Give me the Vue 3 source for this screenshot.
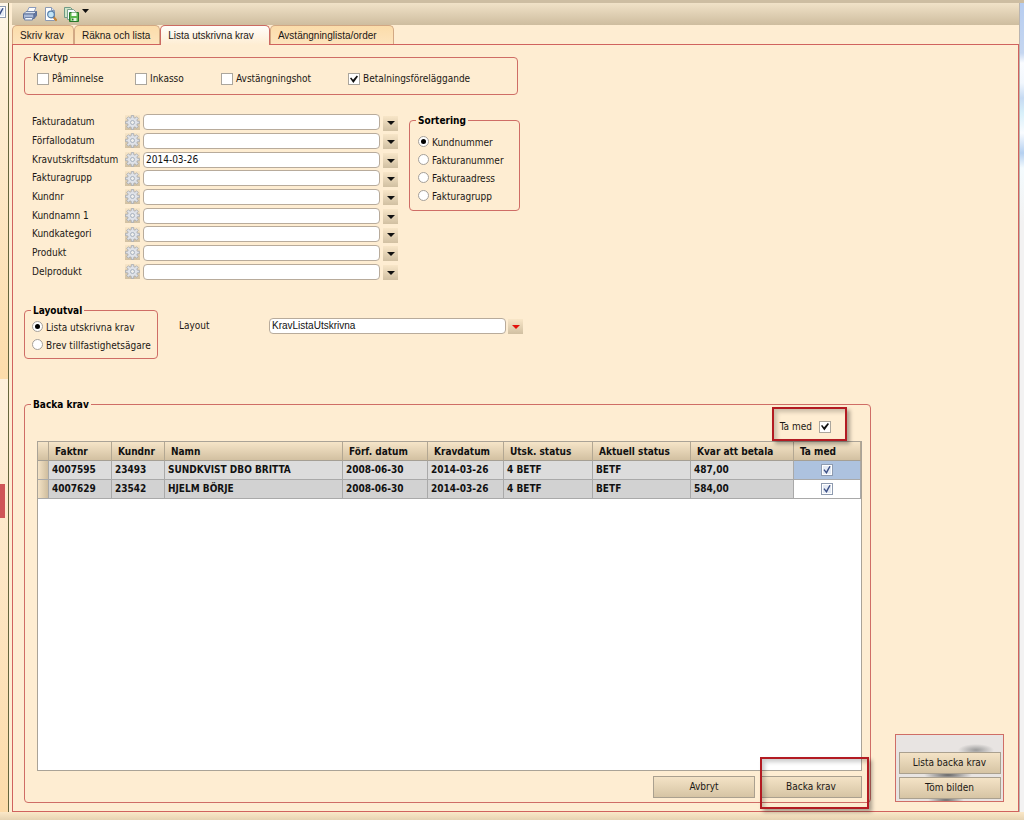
<script setup>
import { ref } from 'vue'

const tabs = ['Skriv krav', 'Räkna och lista', 'Lista utskrivna krav', 'Avstängninglista/order']
const activeTab = ref(2)

const types = ref([
  { id: 'paminnelse', label: 'Påminnelse', on: false },
  { id: 'inkasso', label: 'Inkasso', on: false },
  { id: 'avstangning', label: 'Avstängningshot', on: false },
  { id: 'betalning', label: 'Betalningsföreläggande', on: true }
])

const filters = ref([
  { id: 'fakturadatum', label: 'Fakturadatum', value: '' },
  { id: 'forfallodatum', label: 'Förfallodatum', value: '' },
  { id: 'kravutskriftsdatum', label: 'Kravutskriftsdatum', value: '2014-03-26' },
  { id: 'fakturagrupp', label: 'Fakturagrupp', value: '' },
  { id: 'kundnr', label: 'Kundnr', value: '' },
  { id: 'kundnamn', label: 'Kundnamn 1', value: '' },
  { id: 'kundkategori', label: 'Kundkategori', value: '' },
  { id: 'produkt', label: 'Produkt', value: '' },
  { id: 'delprodukt', label: 'Delprodukt', value: '' }
])

const sortOptions = ['Kundnummer', 'Fakturanummer', 'Fakturaadress', 'Fakturagrupp']
const sort = ref('Kundnummer')
const layoutOptions = ['Lista utskrivna krav', 'Brev tillfastighetsägare']
const layoutKind = ref('Lista utskrivna krav')
const layout = ref('KravListaUtskrivna')

const allOn = ref(true)
const columns = ['Faktnr', 'Kundnr', 'Namn', 'Förf. datum', 'Kravdatum', 'Utsk. status', 'Aktuell status', 'Kvar att betala', 'Ta med']
const rows = ref([
  { cells: ['4007595', '23493', 'SUNDKVIST DBO BRITTA', '2008-06-30', '2014-03-26', '4 BETF', 'BETF', '487,00'], on: true },
  { cells: ['4007629', '23542', 'HJELM BÖRJE', '2008-06-30', '2014-03-26', '4 BETF', 'BETF', '584,00'], on: true }
])

// Outline of an eight-toothed wheel centred in a 15x15 box
const gear = Array.from({ length: 8 }, (_, k) =>
  [[-15, 5], [-10, 7], [10, 7], [15, 5]].map(([a, r]) => {
    const t = ((k * 45 + a) * Math.PI) / 180
    return `${(7.5 + r * Math.sin(t)).toFixed(2)},${(7.5 - r * Math.cos(t)).toFixed(2)}`
  }).join(' ')
).join(' ')
</script>

<template>
  <div class="page">
    <div class="topline"></div>
    <div class="body">
      <aside class="left">
        <input class="check dim cut" type="checkbox" checked aria-label="Visa">
        <div class="left-top"></div>
        <div class="left-bottom"><span class="mark"></span></div>
      </aside>

      <main class="main">
        <div class="toolbar">
          <button class="tool" aria-label="Skriv ut">
            <svg width="16" height="16" viewBox="0 0 16 16">
              <path d="M5 6 7 1.5h7L12 6z" fill="#fff" stroke="#8a9abb" />
              <path d="M1.5 8 4 5.500h10.500L13 8z" fill="#dbe4f1" stroke="#7486a9" />
              <path d="M1.500 8H12v4.500H1.500z" fill="#a9bad8" stroke="#5c6f97" />
              <path d="M12 8l2.500-2.500v4.200L12 12.500z" fill="#6479a3" stroke="#5c6f97" />
              <path d="M3 11.500h7.500V14H2.500z" fill="#f5f8fd" stroke="#7486a9" />
            </svg>
          </button>
          <button class="tool" aria-label="Förhandsgranska">
            <svg width="16" height="16" viewBox="0 0 16 16">
              <path d="M2.500 1.500h6l3 3v10h-9z" fill="#fff" stroke="#8a99b3" />
              <path d="M8.500 1.500v3h3" fill="#d9e4f4" stroke="#8a99b3" />
              <path d="M10.500 11l2.500 3" stroke="#c58438" stroke-width="2.200" stroke-linecap="round" />
              <circle cx="8" cy="8.500" r="3.300" fill="#c1e4f6" stroke="#547da8" stroke-width="1.200" />
            </svg>
          </button>
          <button class="tool wide" aria-label="Spara som">
            <svg width="16" height="16" viewBox="0 0 16 16">
              <path d="M.5 1.500h6l2 2v8h-8z" fill="#cfe6c8" stroke="#6f9a86" />
              <path d="M3.500 3.500h6l2 2v8h-8z" fill="#f5faff" stroke="#7fa08f" />
              <path d="M5.500 6.500h9v9h-9z" fill="#5cb850" stroke="#28762a" />
              <path d="M7.500 6.500h5v3.500h-5z" fill="#f7fff4" />
              <path d="M7.500 12h5v3h-5z" fill="#e6f5e2" />
              <path d="M8 12.500h1.500v2H8z" fill="#28762a" />
            </svg>
            <svg class="caret" width="7" height="4" viewBox="0 0 7 4"><path d="M0 0h7L3.500 4z" fill="#111" /></svg>
          </button>
        </div>

        <nav class="tabs" role="tablist">
          <button
            v-for="(t, i) in tabs" :key="t" class="tab" :class="{ active: i === activeTab }"
            role="tab" :aria-selected="i === activeTab" @click="activeTab = i"
          >{{ t }}</button>
        </nav>

        <section class="panel">
          <fieldset class="box kravtyp">
            <legend class="light">Kravtyp</legend>
            <div class="types">
              <label v-for="t in types" :key="t.id" class="opt" :for="t.id">
                <input :id="t.id" v-model="t.on" class="check" type="checkbox">{{ t.label }}
              </label>
            </div>
          </fieldset>

          <div class="search">
            <div class="filters">
              <div v-for="f in filters" :key="f.id" class="filter">
                <label :for="f.id">{{ f.label }}</label>
                <button class="mini" :aria-label="'Inställningar ' + f.label">
                  <svg width="15" height="15" viewBox="0 0 15 15">
                    <polygon :points="gear" fill="#dfe2e8" stroke="#a2a6ac" stroke-width=".8" stroke-linejoin="round" />
                    <circle cx="7.500" cy="7.500" r="2" fill="#f0efec" stroke="#a6b0be" />
                  </svg>
                </button>
                <input :id="f.id" v-model="f.value" class="text" type="text">
                <button class="mini drop" :aria-label="'Välj ' + f.label">
                  <svg width="8" height="4" viewBox="0 0 8 4"><path d="M0 0h8L4 4z" fill="#111" /></svg>
                </button>
              </div>
            </div>
            <fieldset class="box sorting">
              <legend>Sortering</legend>
              <label v-for="s in sortOptions" :key="s" class="opt">
                <input v-model="sort" class="radio" type="radio" name="sort" :value="s"><span>{{ s }}</span>
              </label>
            </fieldset>
          </div>

          <div class="layout">
            <fieldset class="box kinds">
              <legend>Layoutval</legend>
              <label v-for="s in layoutOptions" :key="s" class="opt">
                <input v-model="layoutKind" class="radio" type="radio" name="kind" :value="s"><span>{{ s }}</span>
              </label>
            </fieldset>
            <div class="layout-row">
              <label for="layout">Layout</label>
              <input id="layout" v-model="layout" class="text arial" type="text">
              <button class="mini drop" aria-label="Välj layout">
                <svg width="8" height="4" viewBox="0 0 8 4"><path d="M0 0h8L4 4z" fill="#e3120c" /></svg>
              </button>
            </div>
          </div>

          <div class="lower">
            <fieldset class="box backa">
              <legend>Backa krav</legend>
              <div class="backa-in">
                <div class="all">
                  <label class="all-label callout">Ta med<input v-model="allOn" class="check" type="checkbox"></label>
                </div>
                <div class="grid">
                  <table>
                    <colgroup>
                      <col class="c-mark"><col class="c-fakt"><col class="c-kund"><col><col class="c-forf">
                      <col class="c-krav"><col class="c-utsk"><col class="c-akt"><col class="c-kvar"><col class="c-ta">
                    </colgroup>
                    <thead>
                      <tr><th></th><th v-for="c in columns" :key="c">{{ c }}</th></tr>
                    </thead>
                    <tbody>
                      <tr v-for="r in rows" :key="r.cells[0]">
                        <td class="handle"></td>
                        <td v-for="(c, i) in r.cells" :key="i">{{ c }}</td>
                        <td class="pick"><input v-model="r.on" class="check dim" type="checkbox" :aria-label="'Ta med ' + r.cells[0]"></td>
                      </tr>
                    </tbody>
                  </table>
                </div>
                <div class="actions">
                  <button class="btn">Avbryt</button>
                  <div class="callout big"><button class="btn">Backa krav</button></div>
                </div>
              </div>
            </fieldset>
            <div class="side">
              <button class="btn">Lista backa krav</button>
              <button class="btn">Töm bilden</button>
            </div>
          </div>
        </section>
      </main>
      <div class="right"></div>
    </div>
    <div class="bottomline"></div>
  </div>
</template>

<style>
body { background: #feedd2; }
</style>

<style scoped>
* { box-sizing: border-box; }
.page {
  min-height: 100vh;
  display: flex;
  flex-direction: column;
  background: #feedd2;
  color: #1c1814;
  font: 10px/14px "DejaVu Sans Condensed", "DejaVu Sans", "Noto Sans", sans-serif;
}
button, input { font: inherit; color: inherit; margin: 0; padding: 0; }
.topline { height: 3px; background: #cdbda2; }
.body { flex: 1; display: flex; }
.bottomline { height: 8px; background: linear-gradient(#fbe8c8, #e6d3b2); }

.left { width: 9px; margin-right: 3px; border-right: 1px solid #66653d; display: flex; flex-direction: column; overflow: hidden; position: relative; }
.cut { position: absolute; left: -6px; top: 3px; }
.left-top { height: 376px; background: linear-gradient(#fff7e8 0, #feedd2 25%, #fddcaa 100%); }
.left-bottom { flex: 1; padding-top: 105px; background: linear-gradient(#fef0dc, #fddba9); }
.mark { display: block; width: 5px; height: 34px; background: #cf5558; }
.right { width: 5px; border-left: 1px solid #b9b4b0; background: linear-gradient(#b7cdf0 0, #c5d6f0 50px, #fafcff 60px, #f2f7fd 80px, #c6daf2 95px, #d8f0fa 110px, #fafcff 130px, #b5d0f0 150px, #f4fbfe 165px, #f3f2f2 220px, #f3f2f2); }

.main { flex: 1; min-width: 0; display: flex; flex-direction: column; }
.toolbar { height: 22px; display: flex; align-items: center; gap: 5px; padding-left: 10px; background: linear-gradient(#f1e2c8, #cebd9f); }
.tool { display: flex; border: 0; background: none; height: 16px; width: 16px; }
.tool.wide { width: 26px; gap: 2px; }
.caret { margin-top: 3px; flex: none; }

.tabs { height: 20px; margin-bottom: -1px; display: flex; align-items: flex-start; position: relative; }
.tab {
  height: 19px; padding: 0 9px 0 7px; border: 1px solid #d2a883; border-bottom: 0; border-radius: 5px 5px 0 0;
  background: linear-gradient(#fbdcaa, #fde4bd); font: 10px/19px "Liberation Sans", Arial, sans-serif; white-space: nowrap;
}
.tab:last-child { padding-right: 16px; }
.tab.active { height: 20px; background: linear-gradient(#fffdfa, #feedd2); border-color: #cc6a62; padding: 0 15px 0 7px; line-height: 20px; }

.panel { flex: 1; display: flex; flex-direction: column; border: 1px solid #d0625e; padding: 5px 14px 8px 11px; }
.box { margin: 0; min-width: 0; padding: 0; border: 1px solid #cf6d66; border-radius: 4px; }
legend { margin-left: 6px; padding: 1px 2px 0; line-height: 13px; font-weight: bold; color: #000; }
legend.light { font-weight: normal; }
.opt { display: flex; align-items: center; gap: 3px; height: 18px; white-space: nowrap; }

.kravtyp { width: 494px; height: 45px; }
.types { display: grid; grid-template-columns: 98px 86px 127px auto; padding: 6px 0 0 12px; }

.check { appearance: none; flex: none; width: 12px; height: 12px; border: 1px solid #aba69d; background: #fff; display: grid; place-items: center; }
.check:checked::before { content: ""; width: 8px; height: 8px; background: #111; clip-path: polygon(0 40%, 15% 30%, 38% 60%, 85% 5%, 100% 20%, 42% 100%); }
.check.dim { border-color: #8e9bb0; background: #e4eaf4; box-shadow: inset 0 0 0 1px #fff; }
.check.dim:checked::before { background: #3b4f86; clip-path: polygon(5% 50%, 20% 40%, 40% 68%, 80% 0, 95% 5%, 45% 100%); }
.radio { appearance: none; flex: none; width: 11px; height: 11px; border: 1px solid #a5a099; border-radius: 50%; background: #fff; display: grid; place-items: center; }
.radio:checked::before { content: ""; width: 5px; height: 5px; border-radius: 50%; background: #000; }
.radio + span { padding-top: 3px; }

.search { display: flex; align-items: flex-start; gap: 11px; margin-top: 18px; padding-left: 8px; }
.filters { display: grid; grid-template-rows: repeat(9, 1fr); height: 168px; }
.filter { display: grid; grid-template-columns: 93px 15px 243px 15px; align-items: center; }
.filter .text { margin-left: 3px; }
.mini { width: 15px; height: 15px; border: 0; display: grid; place-items: center; background: linear-gradient(#f8e6c8, #d1c0a2); }
.drop { margin-top: 2px; }
.text { width: 237px; height: 16px; border: 1px solid #b8ab9b; border-radius: 4px; background: #fff; padding: 0 2px; color: #111; }
.arial { font-family: "Liberation Sans", Arial, sans-serif; }
.sorting { width: 111px; height: 98px; }
.sorting .opt { padding-left: 8px; }
.sorting .opt:first-of-type { margin-top: 5px; }

.layout { display: flex; margin-top: 22px; gap: 21px; }
.kinds { width: 134px; height: 56px; }
.kinds .opt { padding-left: 7px; }
.layout-row { display: grid; grid-template-columns: 90px 239px 15px; align-items: center; height: 16px; margin-top: 14px; }

.lower { flex: 1; display: flex; gap: 24px; margin-top: 38px; min-height: 260px; }
.backa { flex: 1; display: flex; flex-direction: column; }
.backa-in { flex: 1; display: flex; flex-direction: column; padding: 0 8px 4px 12px; height: 390px; }
.all { height: 30px; display: flex; align-items: flex-end; justify-content: flex-end; padding-right: 31px; }
.all-label { display: flex; align-items: center; gap: 7px; height: 29px; }
.callout { position: relative; }
.callout::after { content: ""; position: absolute; inset: -5px -16px 0 -8px; border: 2px solid #b31b22; box-shadow: 3px 3px 4px #0005, inset 3px 3px 4px #0003; pointer-events: none; }
.callout.big::after { inset: -19px -7px -11px 0; }
.grid { flex: 1; border: 1px solid #aaa397; background: #fff; }
table { width: 100%; table-layout: fixed; border-collapse: separate; border-spacing: 0; font-weight: bold; color: #111; }
th { height: 19px; padding: 1px 0 0 6px; text-align: left; background: linear-gradient(#f6e5c8, #d2c0a1); border-right: 1px solid #b3a792; border-bottom: 1px solid #a59f94; white-space: nowrap; }
td { height: 19px; padding: 0 0 0 3px; background: #dcdcdc; border-right: 1px solid #a9a9a9; border-bottom: 1px solid #a9a9a9; white-space: nowrap; }
tbody tr:last-child td { background: #d2d2d2; }
tbody .handle, tbody tr:last-child .handle { background: linear-gradient(90deg, #f3e2c5, #cfbd9e); }
tbody .pick { padding: 0; background: #adc2df; }
tbody tr:last-child .pick { background: #fff; }
.pick .check { margin: 0 auto; }
.c-mark { width: 11px; } .c-fakt { width: 63px; } .c-kund { width: 53px; } .c-forf { width: 85px; }
.c-krav { width: 76px; } .c-utsk { width: 89px; } .c-akt { width: 98px; } .c-kvar { width: 103px; } .c-ta { width: 67px; }

.actions { display: flex; justify-content: flex-end; gap: 5px; padding-top: 5px; }
.btn { display: block; width: 102px; height: 22px; border: 1px solid #aaa08f; background: linear-gradient(#f4e3c6, #d6c4a4); text-align: center; }
.side {
  align-self: flex-end; width: 109px; height: 68px; margin-bottom: 1px; border: 1px solid #cf6d66;
  display: flex; flex-direction: column; align-items: center; justify-content: flex-end; gap: 3px; padding-bottom: 2px;
  background: radial-gradient(ellipse 18px 6px at 80px 15px, #9a9a9a, #9a9a9a00), radial-gradient(ellipse 24px 5px at 52px 40px, #666, #6660), radial-gradient(ellipse 18px 3px at 50px 65px, #666, #6660), #e8e4e2;
}
</style>
